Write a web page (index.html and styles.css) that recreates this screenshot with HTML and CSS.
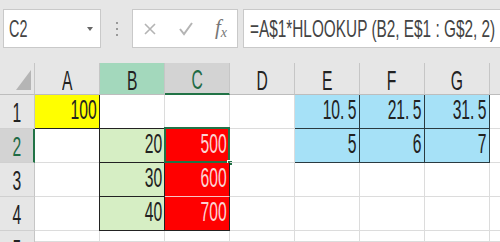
FILE: index.html
```html
<!DOCTYPE html>
<html>
<head>
<meta charset="utf-8">
<link rel="stylesheet" href="styles.css">
</head>
<body>
<div class="toolbar">
  <div class="namebox"><span class="nt">C2</span><span class="caret"></span></div>
  <div class="grip"><i></i><i></i><i></i></div>
  <div class="iconbox">
    <svg class="ic" width="14" height="14" viewBox="0 0 14 14"><path d="M2 2 L12 12 M12 2 L2 12" stroke="#b4b4b4" stroke-width="1.6" fill="none"/></svg>
    <svg class="ic" width="16" height="14" viewBox="0 0 16 14"><path d="M2 7 L6 12 L14 1" stroke="#b4b4b4" stroke-width="2" fill="none"/></svg>
    <span class="fx">f<sub>x</sub></span>
  </div>
  <div class="formula"><span class="ft">=A$1*HLOOKUP (B2, E$1 : G$2, 2)</span></div>
</div>
<div class="sheet">
  <div class="corner"><span class="tri"></span></div>
  <div class="ch"><span class="h">A</span></div>
  <div class="ch chb"><span class="h">B</span></div>
  <div class="ch chc"><span class="h">C</span></div>
  <div class="ch"><span class="h">D</span></div>
  <div class="ch"><span class="h">E</span></div>
  <div class="ch"><span class="h">F</span></div>
  <div class="ch"><span class="h">G</span></div>
  <div class="ch chlast"></div>

  <div class="rh"><span class="h">1</span></div>
  <div class="c yel"><span class="n">100</span></div>
  <div class="c bt"></div>
  <div class="c"></div>
  <div class="c"></div>
  <div class="c blue"><span class="n">10<span class="dot">.</span>5</span></div>
  <div class="c blue"><span class="n">21<span class="dot">.</span>5</span></div>
  <div class="c blue"><span class="n">31<span class="dot">.</span>5</span></div>
  <div class="c last"></div>

  <div class="rh rhs"><span class="h">2</span></div>
  <div class="c"></div>
  <div class="c grn"><span class="n">20</span></div>
  <div class="c red sel"><span class="n">500</span><span class="handle"></span></div>
  <div class="c"></div>
  <div class="c blue"><span class="n">5</span></div>
  <div class="c blue"><span class="n">6</span></div>
  <div class="c blue"><span class="n">7</span></div>
  <div class="c last"></div>

  <div class="rh"><span class="h">3</span></div>
  <div class="c"></div>
  <div class="c grn"><span class="n">30</span></div>
  <div class="c red pink"><span class="n">600</span></div>
  <div class="c"></div>
  <div class="c"></div>
  <div class="c"></div>
  <div class="c"></div>
  <div class="c last"></div>

  <div class="rh"><span class="h">4</span></div>
  <div class="c"></div>
  <div class="c grn"><span class="n">40</span></div>
  <div class="c red dk"><span class="n">700</span></div>
  <div class="c"></div>
  <div class="c"></div>
  <div class="c"></div>
  <div class="c"></div>
  <div class="c last"></div>

  <div class="rh rh5"><span class="h">5</span></div>
  <div class="c"></div>
  <div class="c"></div>
  <div class="c"></div>
  <div class="c"></div>
  <div class="c"></div>
  <div class="c"></div>
  <div class="c"></div>
  <div class="c last"></div>
</div>
</body>
</html>
```

FILE: styles.css
```css
* { box-sizing: border-box; }
html, body { margin: 0; padding: 0; }
body {
  width: 500px;
  height: 242px;
  overflow: hidden;
  background: #e6e6e6;
  font-family: "Liberation Sans", Arial, sans-serif;
  color: #222;
}
.toolbar {
  display: flex;
  align-items: stretch;
  height: 63px;
  padding: 9px 0 15px 3px;
}
.namebox {
  width: 98px;
  background: #fff;
  border: 1px solid #c9c9c9;
  display: flex;
  align-items: center;
  justify-content: space-between;
  padding: 0 7px 0 5px;
}
.nt {
  display: inline-block;
  font-size: 24px;
  color: #444;
  transform: scaleX(0.6);
  transform-origin: left center;
}
.caret {
  width: 0; height: 0;
  border-left: 3px solid transparent;
  border-right: 3px solid transparent;
  border-top: 4px solid #666;
}
.grip {
  width: 31px;
  display: flex;
  flex-direction: column;
  align-items: center;
  justify-content: center;
  gap: 4px;
}
.grip i {
  display: block;
  width: 2px; height: 2px;
  background: #999;
}
.iconbox {
  width: 106px;
  background: #fff;
  border: 1px solid #c9c9c9;
  display: flex;
  align-items: center;
  justify-content: space-between;
  padding: 0 10px 0 10px;
}
.fx {
  font-family: "Liberation Serif", serif;
  font-style: italic;
  font-size: 21px;
  color: #777;
  line-height: 1;
}
.fx sub { font-size: 14px; vertical-align: -3px; }
.formula {
  flex: 1;
  margin-left: 5px;
  background: #fff;
  border: 1px solid #c9c9c9;
  border-right: none;
  display: flex;
  align-items: center;
  padding-left: 6px;
  overflow: hidden;
  white-space: nowrap;
}
.ft {
  display: inline-block;
  font-size: 24px;
  color: #444;
  transform: scaleX(0.64);
  transform-origin: left center;
}

.sheet {
  display: grid;
  grid-template-columns: 35px repeat(7, 65px) 1fr;
  grid-template-rows: 32px repeat(4, 34px) 1fr;
  height: 179px;
  background: #fff;
}
.corner, .ch, .rh {
  background: #e6e6e6;
  border-right: 1px solid #c6c6c6;
  border-bottom: 1px solid #bdbdbd;
  font-size: 28px;
  line-height: 1;
  color: #222;
  display: flex;
  align-items: center;
  justify-content: center;
  overflow: hidden;
}
.ch { padding-top: 4px; }
.h {
  display: inline-block;
  transform: scaleX(0.56);
}
.corner { position: relative; }
.tri {
  position: absolute;
  right: 3px; bottom: 4px;
  width: 0; height: 0;
  border-left: 15px solid transparent;
  border-bottom: 20px solid #b5b5b5;
}
.chb { background: #a3d8bc; }
.chc { background: #d3d3d3; color: #1f6b45; border-bottom: 2px solid #217346; }
.chlast { border-right: none; }
.rh { border-bottom-color: #d0d0d0; padding-top: 2px; }
.rhs { background: #d3d3d3; color: #1f6b45; border-right: 2px solid #217346; }
.rh5 { align-items: flex-start; padding-top: 5px; border-bottom: none; }

.c {
  border-right: 1px solid #dcdcdc;
  border-bottom: 1px solid #dcdcdc;
  display: flex;
  align-items: flex-end;
  justify-content: flex-end;
  padding: 0 2px 4px 0;
  font-size: 28px;
  line-height: 1;
  position: relative;
}
.c.last { border-right: none; }
.n {
  display: inline-block;
  transform: scaleX(0.56);
  transform-origin: right bottom;
  white-space: nowrap;
}
.dot { margin-right: 6px; }
.yel { background: #ffff00; border-right-color: #222; border-bottom-color: #222; }
.bt { border-bottom-color: #222; }
.grn { background: #d6eec4; border-left: 1px solid #222; border-right-color: #222; border-bottom-color: #222; margin-left: -1px; }
.red { background: #ff0000; color: #fbd3d3; border-right-color: #222; }
.pink { border-bottom-color: #f8c4c4; }
.dk { border-bottom-color: #222; }
.blue { background: #a6e1f7; border-right-color: #2a3a40; border-bottom-color: #2a3a40; }
.sel { border-bottom-color: #217346; }
.sel::before {
  content: "";
  position: absolute;
  left: -1px; top: -2px; right: -1px; bottom: -1px;
  border: 2px solid #217346;
  pointer-events: none;
}
.handle {
  position: absolute;
  right: -4px; bottom: -4px;
  width: 6px; height: 6px;
  background: #217346;
  border: 1px solid #fff;
}
```
